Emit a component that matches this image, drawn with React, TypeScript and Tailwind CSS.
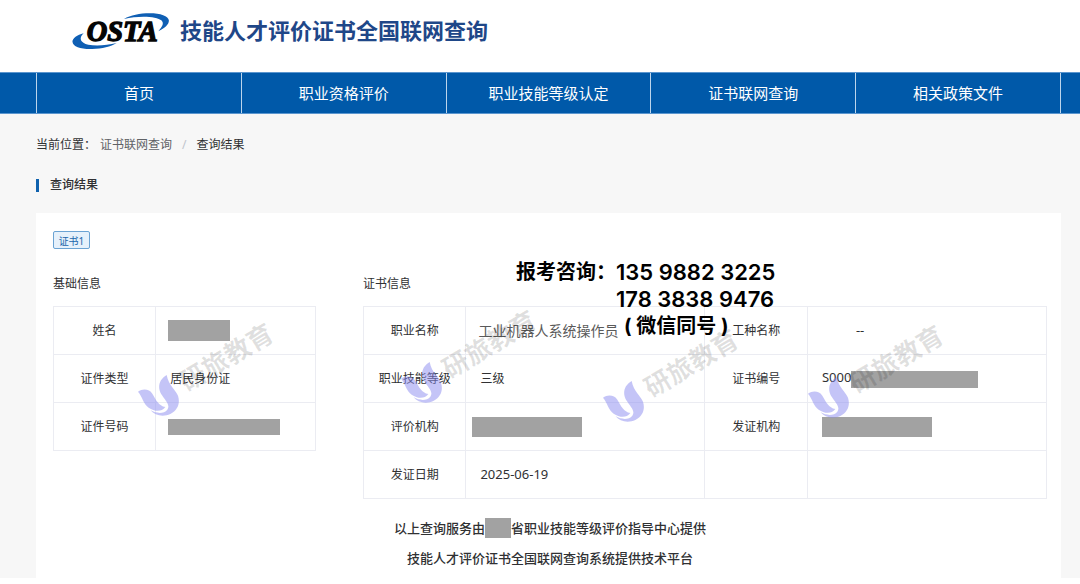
const NAV_ITEMS = ["首页", "职业资格评价", "职业技能等级认定", "证书联网查询", "相关政策文件"];

function Logo() {
  return (
    <svg
      className="h-[37px] w-[98px] flex-shrink-0"
      viewBox="36 38 294 112"
      role="img"
      aria-label="OSTA"
    >
      <path
        d="M70 99C50 104 36 114 36 125C38 141 62 148 96 147C126 146 152 140 170 129C140 136 108 139 84 134C60 128 54 114 70 99Z"
        fill="#0f5fb4"
      />
      <path
        d="M192 56C212 45 240 39 270 39C302 39 327 47 328 61C328 73 316 84 296 93C308 80 314 70 306 61C290 47 236 46 192 56Z"
        fill="#0f5fb4"
      />
      <text
        x="79"
        y="123"
        fontFamily="'Liberation Serif', serif"
        fontSize="86"
        fontWeight="700"
        fontStyle="italic"
        fill="#050505"
        stroke="#050505"
        strokeWidth="4"
      >
        OSTA
      </text>
    </svg>
  );
}

function Redacted({ className }: { className: string }) {
  return <span className={`inline-block bg-[#a2a2a2] align-middle ${className}`} />;
}

function Watermark({ className }: { className: string }) {
  return (
    <div aria-hidden="true" className={`pointer-events-none absolute h-[41px] w-[41px] ${className}`}>
      <svg className="h-full w-full opacity-50" viewBox="0 0 123 123" fill="#8b8bf1">
        <path d="M0 50C14 40 34 42 43 56C54 75 62 92 82 96C70 112 50 110 32 98C15 85 14 66 0 50Z" />
        <path d="M86 0C62 14 58 38 70 58C82 77 98 90 88 104C78 117 55 116 38 106C50 122 76 127 97 117C120 105 127 84 120 62C114 46 92 32 86 0Z" />
      </svg>
      <span className="absolute -top-[38px] left-[36px] -rotate-[31deg] text-[26px] leading-[40px] font-bold whitespace-nowrap text-black/12">
        研旅教育
      </span>
    </div>
  );
}

function Label({ children }: { children?: React.ReactNode }) {
  return (
    <th scope="row" className="border border-[#ebecf2] text-center font-normal">
      {children}
    </th>
  );
}

function Value({ className = "pl-3.5", children }: { className?: string; children?: React.ReactNode }) {
  return <td className={`border border-[#ebecf2] ${className}`}>{children}</td>;
}

export default function App() {
  return (
    <div className="bg-white font-['Noto_Sans','Noto_Sans_CJK_SC',sans-serif] text-xs text-[#303133]">
      <header className="flex h-[72px] items-center gap-2.5 pb-2.5 pl-[72px]">
        <Logo />
        <h1 className="text-[22px] font-bold whitespace-nowrap text-[#1f4788]">
          技能人才评价证书全国联网查询
        </h1>
      </header>

      <nav className="border-y border-[#5b96cf] bg-[#0059a9] pr-[19px] pl-9">
        <ul className="grid grid-cols-5 border-r border-[#bcd5ec]">
          {NAV_ITEMS.map((item) => (
            <li key={item} className="border-l border-[#bcd5ec]">
              <a href="#" className="block text-center text-[15px] leading-10 text-white">
                {item}
              </a>
            </li>
          ))}
        </ul>
      </nav>

      <main className="bg-[#f7f7f7] pt-[21px] pr-[19px] pl-9">
        <div className="flex gap-1 leading-5">
          <span>当前位置：</span>
          <a href="#" className="text-[#606266]">
            证书联网查询
          </a>
          <span className="px-1.5 text-[#c0c4cc]">/</span>
          <span>查询结果</span>
        </div>

        <h2 className="mt-5 flex items-center gap-[11px] leading-5 font-medium">
          <span className="h-[13px] w-[3px] bg-[#0f62ae]" />
          查询结果
        </h2>

        <section className="relative mt-[18px] bg-white pt-[18px] pr-3.5 pb-[5px] pl-[17px]">
          <span className="block h-[18px] w-[37px] rounded-xs border border-[#6ba3d3] bg-[#e6f1fb] text-center text-[10px] leading-[18px] text-[#1a66ac]">
            证书1
          </span>

          <div className="mt-[25px] grid grid-cols-[263fr_684fr] gap-x-[47px]">
            <div>
              <h3 className="mb-3 leading-5">基础信息</h3>
              <table className="w-full table-fixed border-collapse">
                <colgroup>
                  <col className="w-[39%]" />
                  <col />
                </colgroup>
                <tbody>
                  <tr className="h-12">
                    <Label>姓名</Label>
                    <Value className="pl-3">
                      <Redacted className="h-[21px] w-[62px]" />
                    </Value>
                  </tr>
                  <tr className="h-12">
                    <Label>证件类型</Label>
                    <Value>居民身份证</Value>
                  </tr>
                  <tr className="h-12">
                    <Label>证件号码</Label>
                    <Value className="pl-3">
                      <Redacted className="h-4 w-28" />
                    </Value>
                  </tr>
                </tbody>
              </table>
            </div>

            <div>
              <h3 className="mb-3 leading-5">证书信息</h3>
              <table className="w-full table-fixed border-collapse">
                <colgroup>
                  <col className="w-[15%]" />
                  <col className="w-[35%]" />
                  <col className="w-[15%]" />
                  <col className="w-[35%]" />
                </colgroup>
                <tbody>
                  <tr className="h-12">
                    <Label>职业名称</Label>
                    <Value className="pl-3 text-sm whitespace-nowrap text-[#5a5a5a]">
                      工业机器人系统操作员
                    </Value>
                    <Label>工种名称</Label>
                    <Value className="pl-12 text-[13px]">--</Value>
                  </tr>
                  <tr className="h-12">
                    <Label>职业技能等级</Label>
                    <Value>三级</Value>
                    <Label>证书编号</Label>
                    <Value className="pl-3.5 text-[13px] whitespace-nowrap">
                      S000
                      <Redacted className="h-[17px] w-[127px]" />
                    </Value>
                  </tr>
                  <tr className="h-12">
                    <Label>评价机构</Label>
                    <Value className="pl-1.5">
                      <Redacted className="h-5 w-[110px]" />
                    </Value>
                    <Label>发证机构</Label>
                    <Value>
                      <Redacted className="h-5 w-[110px]" />
                    </Value>
                  </tr>
                  <tr className="h-12">
                    <Label>发证日期</Label>
                    <Value className="pl-3.5 text-[13px]">2025-06-19</Value>
                    <Label />
                    <Value />
                  </tr>
                </tbody>
              </table>
            </div>
          </div>

          <div className="mt-3.5 text-center text-[13px] leading-[30px] font-medium">
            <p className="flex items-center justify-center">
              以上查询服务由
              <Redacted className="h-5 w-[26px]" />
              省职业技能等级评价指导中心提供
            </p>
            <p>技能人才评价证书全国联网查询系统提供技术平台</p>
          </div>

          <Watermark className="top-[162px] left-[102px]" />
          <Watermark className="top-[149px] left-[365px]" />
          <Watermark className="top-[168px] left-[567px]" />
          <Watermark className="top-[164px] left-[772px]" />

          {/* Contact note laid over the certificate table */}
          <div className="absolute top-[46px] left-[480px] flex font-['Inter','Noto_Sans_CJK_SC',sans-serif] text-xl leading-[27px] font-bold whitespace-nowrap text-black">
            <span>报考咨询：</span>
            <div>
              <p className="text-[22px] leading-[27px] font-semibold">135 9882 3225</p>
              <p className="text-[22px] leading-[27px] font-semibold">178 3838 9476</p>
              <p className="pl-2">( 微信同号 )</p>
            </div>
          </div>
        </section>
      </main>
    </div>
  );
}
